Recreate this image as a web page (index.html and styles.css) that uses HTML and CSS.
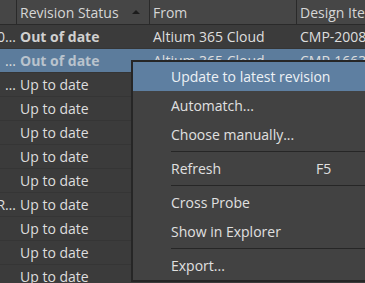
FILE: index.html
```html
<!DOCTYPE html>
<html lang="en">
  <head>
    <meta charset="UTF-8" />
    <meta name="viewport" content="width=device-width, initial-scale=1.0" />
    <title>Component Revisions</title>
    <link rel="stylesheet" href="styles.css">
  </head>
  <body>
    <div class="table">
      <div class="row head">
        <div class="cell"></div>
        <div class="cell sorted">Revision Status <span class="arrow"></span></div>
        <div class="cell">From</div>
        <div class="cell">Design Ite…</div>
      </div>
      <div class="row">
        <div class="cell tail">0…</div>
        <div class="cell bold">Out of date</div>
        <div class="cell">Altium 365 Cloud</div>
        <div class="cell">CMP-2008-00012</div>
      </div>
      <div class="row selected">
        <div class="cell tail">…</div>
        <div class="cell bold">Out of date</div>
        <div class="cell">Altium 365 Cloud</div>
        <div class="cell">CMP-1663-00041</div>
      </div>
      <!-- rows below sit under the context menu, only the status shows -->
      <div class="row">
        <div class="cell tail">…</div>
        <div class="cell">Up to date</div>
        <div class="cell"></div>
        <div class="cell"></div>
      </div>
      <div class="row">
        <div class="cell tail"></div>
        <div class="cell">Up to date</div>
        <div class="cell"></div>
        <div class="cell"></div>
      </div>
      <div class="row">
        <div class="cell tail"></div>
        <div class="cell">Up to date</div>
        <div class="cell"></div>
        <div class="cell"></div>
      </div>
      <div class="row">
        <div class="cell tail"></div>
        <div class="cell">Up to date</div>
        <div class="cell"></div>
        <div class="cell"></div>
      </div>
      <div class="row">
        <div class="cell tail"></div>
        <div class="cell">Up to date</div>
        <div class="cell"></div>
        <div class="cell"></div>
      </div>
      <div class="row">
        <div class="cell tail">R…</div>
        <div class="cell">Up to date</div>
        <div class="cell"></div>
        <div class="cell"></div>
      </div>
      <div class="row">
        <div class="cell tail"></div>
        <div class="cell">Up to date</div>
        <div class="cell"></div>
        <div class="cell"></div>
      </div>
      <div class="row">
        <div class="cell tail"></div>
        <div class="cell">Up to date</div>
        <div class="cell"></div>
        <div class="cell"></div>
      </div>
      <div class="row">
        <div class="cell tail"></div>
        <div class="cell">Up to date</div>
        <div class="cell"></div>
        <div class="cell"></div>
      </div>
    </div>

    <div class="menu">
      <div class="item active">Update to latest revision</div>
      <div class="item">Automatch...</div>
      <div class="item">Choose manually...</div>
      <div class="sep"></div>
      <div class="item"><span class="label">Refresh</span><span>F5</span></div>
      <div class="sep"></div>
      <div class="item">Cross Probe</div>
      <div class="item">Show in Explorer</div>
      <div class="sep"></div>
      <div class="item">Export...</div>
    </div>
  </body>
</html>
```

FILE: styles.css
```css
body {
  margin: 0;
  height: 283px;
  overflow: hidden;
  position: relative;
  background-color: #3b3b3b;
  font-family: "Open Sans", "Noto Sans", sans-serif;
  font-size: 14px;
  color: #dedede;
}
.table {
  width: 420px;
}
.row {
  display: grid;
  grid-template-columns: 17px 133px 147px 123px;
  height: 23px;
  border-bottom: 1px solid #353535;
}
.cell {
  display: flex;
  align-items: center;
  padding-left: 3px;
  white-space: nowrap;
  overflow: hidden;
}
.head {
  height: 24px;
  background-color: #464646;
  border-bottom: 1px solid #2a2a2a;
  color: #d6d6d6;
}
.head .cell {
  border-right: 1px solid #2a2a2a;
}
.sorted {
  justify-content: space-between;
  padding-right: 9px;
}
.arrow {
  width: 0;
  height: 0;
  border-left: 4px solid transparent;
  border-right: 4px solid transparent;
  border-bottom: 4px solid #1c1c1c;
}
.tail {
  justify-content: flex-end;
  padding-left: 0;
  padding-right: 1px;
}
.bold {
  font-weight: bold;
  color: #d0d0d0;
}
.selected {
  background-color: #5c7c9c;
}
.selected .bold {
  color: #b9c3cd;
}
.menu {
  position: absolute;
  left: 131px;
  top: 60px;
  width: 260px;
  background-color: #424242;
  border: 2px solid #262626;
}
.item {
  height: 29px;
  display: flex;
  align-items: center;
  padding-left: 38px;
  color: #e0e0e0;
}
.item.active {
  background-color: #5e7fa1;
  color: #edf1f5;
}
.label {
  width: 145px;
}
.sep {
  height: 1px;
  margin: 2px 0 2px 38px;
  background-color: #262626;
}
```
